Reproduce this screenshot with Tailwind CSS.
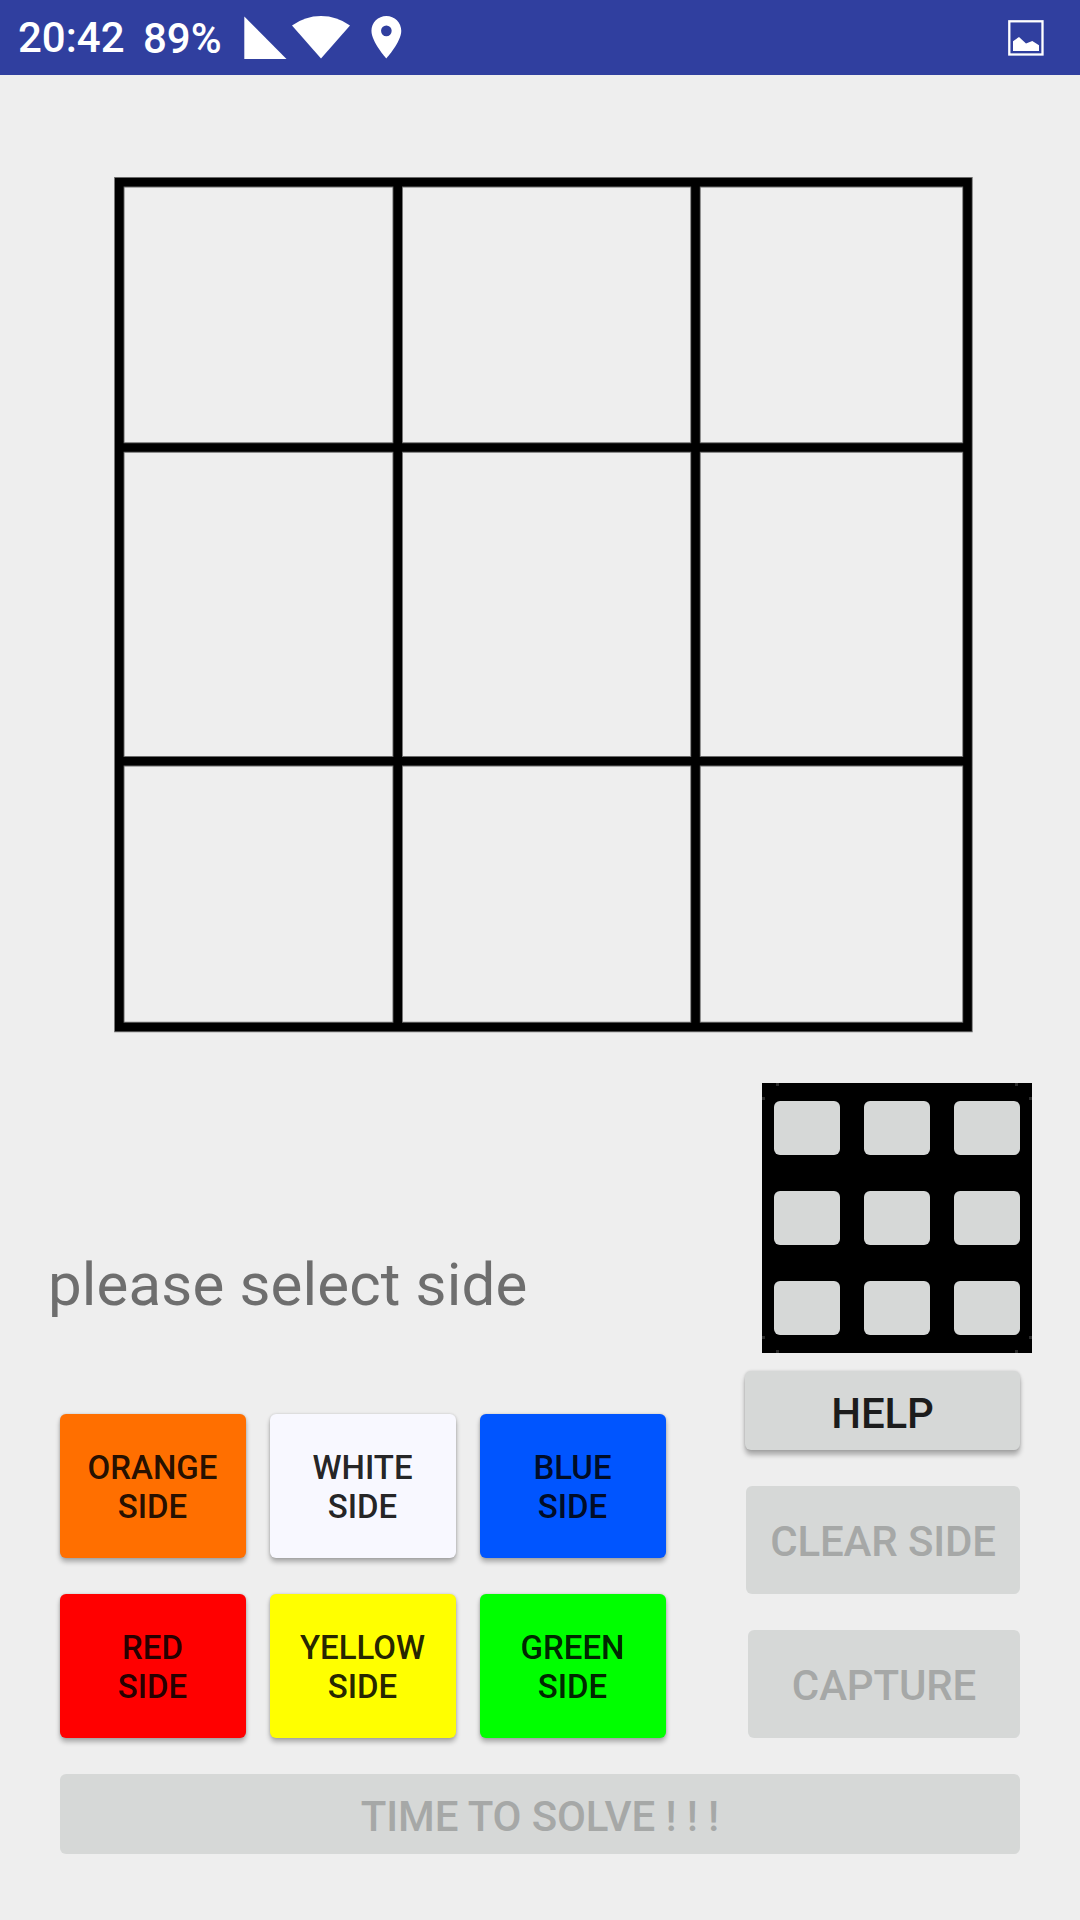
<!DOCTYPE html>
<html lang="en">
<head>
<meta charset="utf-8">
<title>Cube solver</title>
<script src="https://cdn.jsdelivr.net/npm/@tailwindcss/browser@4"></script>
</head>
<body class="w-[1080px] h-[1920px] overflow-hidden bg-[#eeeeee] font-['Roboto',sans-serif] flex flex-col">
  <header class="h-[75px] shrink-0 bg-[#303f9f] text-white font-medium text-[42px] leading-[50px] flex items-start">
    <span class="w-[125px] ml-[18px] pt-[13px] whitespace-nowrap">20:42</span>
    <span class="w-[91px] pt-3.5 whitespace-nowrap">89%</span>
    <svg class="w-[180px] h-[75px]" viewBox="234 0 180 75" fill="#fff">
      <path d="M244.300 16.500V59H286.500z"/>
      <path d="M292 25.500Q305 16 321 16T350 25.500L321 58.500z"/>
      <path transform="translate(360.800 11.700) scale(2.130)" fill-rule="evenodd" d="M12 2C8.130 2 5 5.130 5 9c0 5.250 7 13 7 13s7-7.750 7-13c0-3.870-3.130-7-7-7zm0 9.500a2.500 2.500 0 0 1 0-5 2.500 2.500 0 0 1 0 5z"/>
    </svg>
    <svg class="w-[36px] h-[36px] ml-auto mr-9 mt-5" viewBox="0 0 36 36" fill="#fff">
      <rect x="1.300" y="1.300" width="33.200" height="33.200" fill="none" stroke="#fff" stroke-width="2.300"/>
      <path d="M5 31V21.200L11 17L18 23.600L24.300 21L31 25.200V31z"/>
    </svg>
  </header>

  <main class="flex flex-col">
    <!-- capture frame -->
    <svg class="w-[1080px] h-[1008px]" viewBox="0 75 1080 1008" fill="none" stroke="#000">
      <path stroke-width="10.400" stroke-opacity=".55" d="M119.300 182.300H967.500V1027H119.300zM397.700 182V1027M695.500 182V1027M119 447.500H967M119 761.300H967"/>
      <path stroke-width="8.600" d="M119.300 182.300H967.500V1027H119.300zM397.700 182V1027M695.500 182V1027M119 447.500H967M119 761.300H967"/>
    </svg>

    <section class="flex justify-between pl-[60px] h-[691px]">
      <div class="flex flex-col w-[606px]">
        <p class="h-[331px] pt-[167px] -ml-3 text-[60px] leading-[70px] tracking-[0.15px] text-[#6e6e6e] whitespace-nowrap">please select side</p>
        <div class="grid grid-cols-3 gap-x-6 gap-y-9 text-[33px] leading-[39px] font-medium text-black/87">
          <button class="h-36 rounded-md pt-0.5 pr-px bg-[#ff6f00] shadow-[0_4px_5px_rgba(0,0,0,0.28),0_0_3px_rgba(0,0,0,0.16)]">ORANGE<br>SIDE</button>
          <button class="h-36 rounded-md pt-0.5 pr-px bg-[#f8f8ff] shadow-[0_4px_5px_rgba(0,0,0,0.28),0_0_3px_rgba(0,0,0,0.16)]">WHITE<br>SIDE</button>
          <button class="h-36 rounded-md pt-0.5 pr-px bg-[#0055ff] shadow-[0_4px_5px_rgba(0,0,0,0.28),0_0_3px_rgba(0,0,0,0.16)]">BLUE<br>SIDE</button>
          <button class="h-36 rounded-md pt-0.5 pr-px bg-[#ff0000] shadow-[0_4px_5px_rgba(0,0,0,0.28),0_0_3px_rgba(0,0,0,0.16)]">RED<br>SIDE</button>
          <button class="h-36 rounded-md pt-0.5 pr-px bg-[#ffff00] shadow-[0_4px_5px_rgba(0,0,0,0.28),0_0_3px_rgba(0,0,0,0.16)]">YELLOW<br>SIDE</button>
          <button class="h-36 rounded-md pt-0.5 pr-px bg-[#00ff00] shadow-[0_4px_5px_rgba(0,0,0,0.28),0_0_3px_rgba(0,0,0,0.16)]">GREEN<br>SIDE</button>
        </div>
      </div>

      <div class="flex flex-col items-end w-[287px] mr-12 text-[42px] font-medium tracking-[-0.15px]">
        <!-- side preview -->
        <div class="relative w-[270px] h-[270px] bg-black grid grid-cols-3 gap-x-6 gap-y-9 px-3 py-[18px]">
          <span class="rounded-md bg-[#d6d8d7]"></span><span class="rounded-md bg-[#d6d8d7]"></span><span class="rounded-md bg-[#d6d8d7]"></span>
          <span class="rounded-md bg-[#d6d8d7]"></span><span class="rounded-md bg-[#d6d8d7]"></span><span class="rounded-md bg-[#d6d8d7]"></span>
          <span class="rounded-md bg-[#d6d8d7]"></span><span class="rounded-md bg-[#d6d8d7]"></span><span class="rounded-md bg-[#d6d8d7]"></span>
          <svg class="absolute inset-0 w-full h-full" viewBox="0 0 270 270" fill="#2b2b2b"><path d="M14 0h3v3h-3zM253 0h3v3h-3zM0 14h3v3H0zM267 14h3v3h-3zM0 253h3v3H0zM267 253h3v3h-3zM14 267h3v3h-3zM253 267h3v3h-3z"/></svg>
        </div>
        <button class="mt-[18px] mr-3 w-[275px] h-[79px] rounded-md pt-[5px] bg-[#d6d8d7] text-[#1c1c1c] shadow-[0_5px_5px_rgba(0,0,0,0.28),0_0_3px_rgba(0,0,0,0.16)]">HELP</button>
        <button disabled class="mt-9 mr-3 w-[274px] h-[108px] rounded-md pt-0.5 bg-[#d6d8d7] text-[#a6a8a7] whitespace-nowrap">CLEAR SIDE</button>
        <button disabled class="mt-9 mr-3 w-[272px] h-[108px] rounded-md pt-0.5 bg-[#d6d8d7] text-[#a6a8a7]">CAPTURE</button>
      </div>
    </section>

    <button disabled class="mx-[60px] h-20 rounded-md pt-1 bg-[#d6d8d7] text-[#a6a8a7] text-[42px] font-medium tracking-[-0.12px]">TIME TO SOLVE ! ! !</button>
  </main>
</body>
</html>
